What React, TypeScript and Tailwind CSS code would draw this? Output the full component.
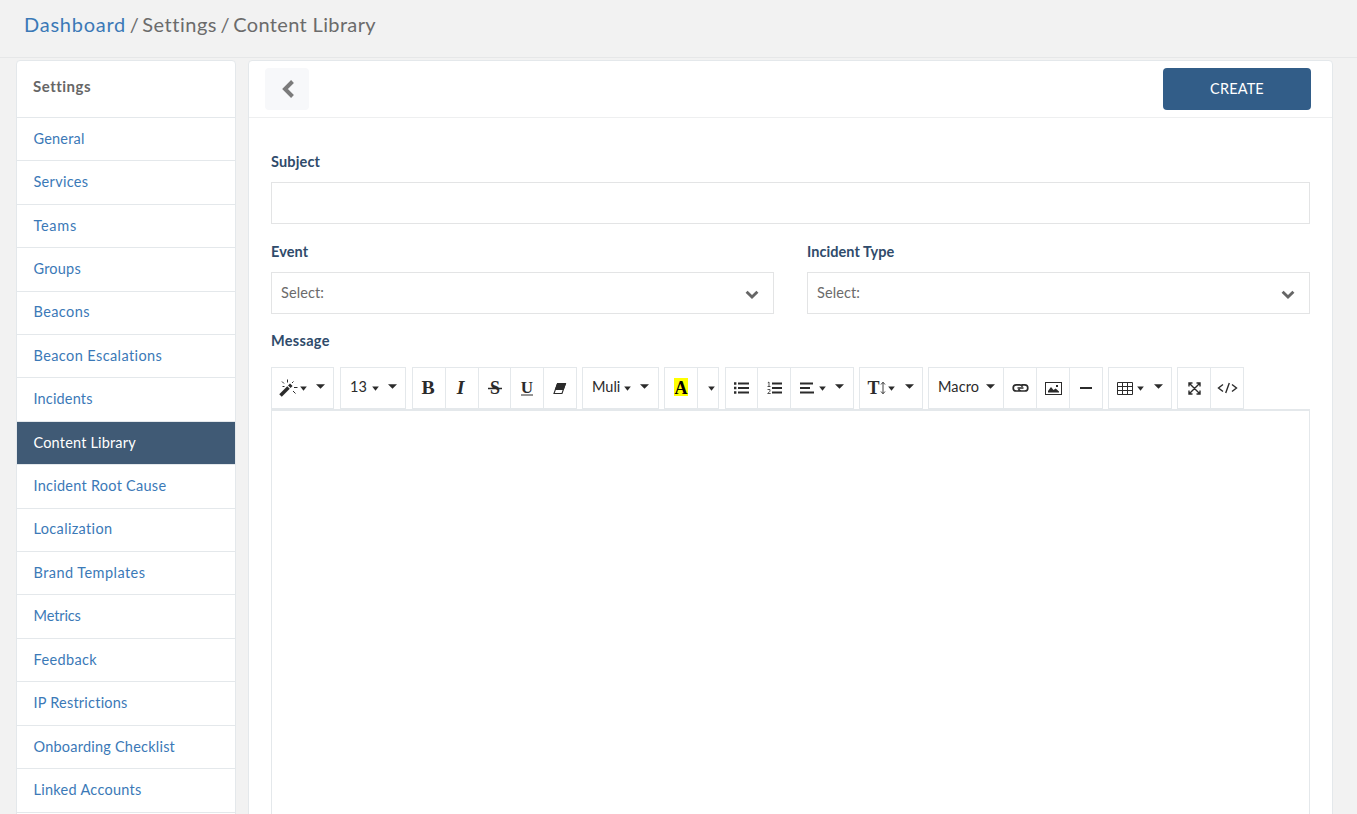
import type { ReactNode } from "react"
import clsx from "clsx"

const menu = [
    { label: "General", tracking: "tracking-[0.2px]" },
    { label: "Services", tracking: "tracking-[0.3px]" },
    { label: "Teams", tracking: "tracking-[0.7px]" },
    { label: "Groups", tracking: "tracking-[0.2px]" },
    { label: "Beacons", tracking: "tracking-[0.4px]" },
    { label: "Beacon Escalations", tracking: "tracking-[0.41px]" },
    { label: "Incidents", tracking: "tracking-[0.16px]" },
    { label: "Content Library", tracking: "tracking-[0.18px]" },
    { label: "Incident Root Cause", tracking: "tracking-[0.26px]" },
    { label: "Localization", tracking: "tracking-[0.34px]" },
    { label: "Brand Templates", tracking: "tracking-[0.45px]" },
    { label: "Metrics", tracking: "tracking-[-0.1px]" },
    { label: "Feedback", tracking: "tracking-[0.36px]" },
    { label: "IP Restrictions", tracking: "tracking-[0.22px]" },
    { label: "Onboarding Checklist", tracking: "tracking-[0.22px]" },
    { label: "Linked Accounts", tracking: "tracking-[0.28px]" },
]

function Group({ children }: { children: ReactNode }) {
    return <div className="flex border-l border-[#e4e8eb]">{children}</div>
}

function Btn({ className, children }: { className: string; children: ReactNode }) {
    return (
        <button
            type="button"
            className={clsx("flex h-[42px] shrink-0 items-center border-y border-r border-[#e4e8eb] bg-white text-[#2b2b2b]", className)}
        >
            {children}
        </button>
    )
}

function SmallCaret({ className }: { className?: string }) {
    return (
        <svg className={clsx("shrink-0", className)} width="7" height="5" viewBox="0 0 7 5">
            <path d="M0.2 0.5h6.6L3.5 4.8z" fill="currentColor" />
        </svg>
    )
}

function Caret({ className }: { className?: string }) {
    return (
        <svg className={clsx("mb-1 shrink-0", className)} width="9" height="5" viewBox="0 0 9 5">
            <path d="M0 0.3h9L4.5 4.7z" fill="currentColor" />
        </svg>
    )
}

function Icon({ w, h = 16, children }: { w: number; h?: number; children: ReactNode }) {
    return (
        <svg className="shrink-0 overflow-visible" width={w} height={h} viewBox={`0 0 ${w} ${h}`} fill="none" stroke="currentColor">
            {children}
        </svg>
    )
}

function Chevron({ className }: { className: string }) {
    return (
        <svg className={className} width="14" height="10" viewBox="0 0 14 10" fill="none" stroke="#666" strokeWidth="2.9">
            <path d="M1.6 1.7L7 7l5.4-5.3" />
        </svg>
    )
}

function Label({ className, children }: { className?: string; children: ReactNode }) {
    return <label className={clsx("block h-5 text-[14.5px] leading-5 font-bold text-[#2f4b6b]", className)}>{children}</label>
}

function Select({ label, tracking }: { label: string; tracking: string }) {
    return (
        <div className="w-[503px]">
            <Label className={tracking}>{label}</Label>
            <div className="mt-[10px] flex h-[42px] items-center justify-between border border-[#e3e4e5] pr-[14px] pl-[9px] text-[14.5px] text-[#6b6b6b]">
                <span className="tracking-[0.1px]">Select:</span>
                <Chevron className="mt-[3px]" />
            </div>
        </div>
    )
}

function Toolbar() {
    return (
        <div className="flex text-[14.5px]">
            <Group>
                <Btn className="w-[62px] pl-[7px]">
                    <Icon w={19} h={18}>
                        <path d="M1.5 16.5l8-8" strokeWidth="3.6" />
                        <path d="M10.3 7.7l2-2" strokeWidth="3.6" />
                        <path d="M8.5 0.5v3M3 2.5l2 2M14.5 2.5l-1.5 1.5M3.5 7.5h2M15 8.5h3.5M14 12l2.5 2.5" strokeWidth="1" />
                    </Icon>
                    <SmallCaret className="ml-[2px]" />
                    <Caret className="ml-[9px]" />
                </Btn>
            </Group>
            <div className="ml-[6px]">
                <Group>
                    <Btn className="w-[65px] pl-[9px]">
                        <span className="mb-[2px] w-[22px] text-left">13</span>
                        <SmallCaret />
                        <Caret className="ml-[9px]" />
                    </Btn>
                </Group>
            </div>
            <div className="ml-[6px] font-['Liberation_Serif'] text-[18px]">
                <Group>
                    <Btn className="w-[33px] justify-center pr-[2px] font-bold"><span className="scale-x-110">B</span></Btn>
                    <Btn className="w-[33px] justify-center pr-[2px] font-bold italic"><span className="scale-x-110">I</span></Btn>
                    <Btn className="w-[32px] justify-center font-bold">
                        <Icon w={14}>
                            <text x="7" y="14" textAnchor="middle" fontSize="18" stroke="none" fill="currentColor">S</text>
                            <path d="M0 8.5h14" strokeWidth="1.5" />
                        </Icon>
                    </Btn>
                    <Btn className="w-[33px] justify-center font-bold">
                        <Icon w={14}>
                            <text x="7" y="13" textAnchor="middle" fontSize="17" stroke="none" fill="currentColor">U</text>
                            <path d="M1 15h12" strokeWidth="1" />
                        </Icon>
                    </Btn>
                    <Btn className="w-[33px] justify-center pr-px">
                        <Icon w={13} h={13}>
                            <path d="M4.5 1.5h8l-3.5 10h-8z" strokeWidth="1.1" />
                            <path d="M4.500 1.500h8L10.300 7.500H2.400z" fill="currentColor" strokeWidth="1" />
                        </Icon>
                    </Btn>
                </Group>
            </div>
            <div className="ml-[5px]">
                <Group>
                    <Btn className="w-[76px] pl-[9px]">
                        <span className="mb-[2px] w-[32px] text-left">Muli</span>
                        <SmallCaret />
                        <Caret className="ml-[9px]" />
                    </Btn>
                </Group>
            </div>
            <div className="ml-[5px]">
                <Group>
                    <Btn className="w-[33px] pl-[9px]">
                        <span className="mb-[2px] flex h-[18px] w-[14px] items-center justify-center bg-[#ffff00] pt-[2px] font-['Liberation_Serif'] text-[18px] font-bold text-black">A</span>
                    </Btn>
                    <Btn className="w-[21px] pl-[10px]"><SmallCaret /></Btn>
                </Group>
            </div>
            <div className="ml-[6px]">
                <Group>
                    <Btn className="w-[32px] justify-center">
                        <Icon w={15} h={14}>
                            <path d="M4 2.5h11M4 7h11M4 11.5h11" strokeWidth="2" />
                            <path d="M0 2.5h2.4M0 7h2.4M0 11.5h2.4" strokeWidth="2.4" />
                        </Icon>
                    </Btn>
                    <Btn className="w-[33px] justify-center">
                        <Icon w={15} h={14}>
                            <path d="M5 2.5h10M5 7h10M5 11.5h10" strokeWidth="2" />
                            <path d="M0.8 1.8L2 1v4.5M0.5 5.5h3M0.5 8.5h2.5v1.7L0.7 12.5h3" strokeWidth="0.8" />
                        </Icon>
                    </Btn>
                    <Btn className="w-[63px] pl-[9px]">
                        <Icon w={14} h={14}>
                            <path d="M0 2.5h13M0 7h10M0 11.5h14" strokeWidth="2" />
                        </Icon>
                        <SmallCaret className="ml-[5px]" />
                        <Caret className="ml-[9px]" />
                    </Btn>
                </Group>
            </div>
            <div className="ml-[5px]">
                <Group>
                    <Btn className="w-[63px] pl-[7px]">
                        <span className="w-[13px] font-['Liberation_Serif'] text-[18px] font-bold">T</span>
                        <Icon w={6} h={14}>
                            <path d="M3 1.5v11M1 3.5l2-2.3 2 2.3M1 10.5l2 2.3 2-2.3" strokeWidth="0.9" />
                        </Icon>
                        <SmallCaret className="ml-[2px]" />
                        <Caret className="ml-[10px]" />
                    </Btn>
                </Group>
            </div>
            <div className="ml-[5px]">
                <Group>
                    <Btn className="w-[75px] pl-[9px]">
                        <span className="mb-[2px] w-[48px] text-left tracking-[0.1px]">Macro</span>
                        <Caret />
                    </Btn>
                    <Btn className="w-[33px] justify-center">
                        <Icon w={17} h={10}>
                            <path d="M7.5 8H4.3a3.1 3.1 0 010-6.2h3.4c1.2 0 2.3.8 2.7 1.9M9.5 1.8h3.2a3.1 3.1 0 010 6.2H9.3c-1.2 0-2.3-.8-2.7-1.9M5.5 5h6" strokeWidth="1.7" />
                        </Icon>
                    </Btn>
                    <Btn className="w-[33px] justify-center">
                        <Icon w={17} h={13}>
                            <rect x="0.5" y="0.5" width="16" height="12" strokeWidth="1" />
                            <path d="M3 10.5V9l3-4 2.5 3 2.2-1.6L14 9.5v1zM11 3h2v2h-2z" fill="currentColor" stroke="none" />
                        </Icon>
                    </Btn>
                    <Btn className="w-[33px] justify-center">
                        <Icon w={12} h={2}><path d="M0 1h12" strokeWidth="2" /></Icon>
                    </Btn>
                </Group>
            </div>
            <div className="ml-[5px]">
                <Group>
                    <Btn className="w-[63px] pl-[8px]">
                        <Icon w={16} h={13}>
                            <path d="M0.5 0.5h15v12h-15zM5.5 0.5v12M10.5 0.5v12M0.5 4.5h15M0.5 8.5h15" strokeWidth="1" />
                        </Icon>
                        <SmallCaret className="ml-1" />
                        <Caret className="ml-[10px]" />
                    </Btn>
                </Group>
            </div>
            <div className="ml-[5px]">
                <Group>
                    <Btn className="w-[33px] justify-center">
                        <Icon w={13} h={13}>
                            <path d="M1.5 1.5l10 10M11.5 1.5l-10 10M1 4.5V1h3.5M8.5 1H12v3.5M12 8.5V12H8.5M4.5 12H1V8.5" strokeWidth="1.4" />
                        </Icon>
                    </Btn>
                    <Btn className="w-[33px] justify-center">
                        <Icon w={21} h={12}>
                            <path d="M6 2.5L1.5 6 6 9.5M15 2.5L19.5 6 15 9.5M12.3 1L8.7 11" strokeWidth="1.4" />
                        </Icon>
                    </Btn>
                </Group>
            </div>
        </div>
    )
}

export default function App() {
    return (
        <div className="h-[814px] overflow-hidden bg-[#f2f2f2] font-[Lato,sans-serif]">
            <header className="h-[58px] border-b border-[#e6e7e8] pt-[9px] pl-6 text-[20px] leading-[30px] text-[#6b6b6b] [word-spacing:-1.5px]">
                <a href="#" className="tracking-[0.75px] text-[#3b79b7]">Dashboard</a> / <span className="tracking-[0.5px]">Settings</span> /{" "}
                <span className="tracking-[0.35px] [word-spacing:0px]">Content Library</span>
            </header>
            <div className="flex gap-3 pt-[2px] pl-4">
                <aside className="w-[220px] shrink-0 rounded-t-sm border border-[#e4e8eb] bg-white">
                    <h2 className="h-[57px] border-b border-[#e4e8eb] pt-[15px] pl-4 text-[15px] leading-5 font-bold tracking-[0.5px] text-[#666]">Settings</h2>
                    <ul>
                        {menu.map((item) => (
                            <li
                                key={item.label}
                                className={clsx(
                                    "flex h-[43.42px] items-center border-b border-[#e4e8eb] pb-px pl-[16.5px] text-[14.5px]",
                                    item.tracking,
                                    item.label === "Content Library" ? "bg-[#405a75] text-white" : "text-[#3b79b7]",
                                )}
                            >
                                <a href="#">{item.label}</a>
                            </li>
                        ))}
                    </ul>
                </aside>
                <main className="h-[800px] w-[1085px] shrink-0 rounded-t-sm border border-[#e4e8eb] bg-white">
                    <div className="flex h-[57px] items-start justify-between border-b border-[#eeeff0] pt-[7px] pr-[21px] pl-4">
                        <button type="button" className="flex h-[42px] w-11 items-center justify-center rounded-sm bg-[#f7f8fa] pl-[2px]">
                            <svg width="14" height="20" viewBox="0 0 14 20" fill="none" stroke="#7b7b7b" strokeWidth="4">
                                <path d="M11.5 2.5L4 10l7.5 7.5" />
                            </svg>
                        </button>
                        <button type="button" className="h-[42px] w-[148px] rounded-sm bg-[#325d88] text-[14.5px] tracking-[0.15px] text-white">CREATE</button>
                    </div>
                    <form className="pt-[34px] pr-[22px] pl-[22px]">
                        <Label className="tracking-[0.15px]">Subject</Label>
                        <input type="text" className="mt-[10px] block h-[42px] w-full border border-[#e3e4e5]" />
                        <div className="mt-[18px] flex justify-between">
                            <Select label="Event" tracking="tracking-[0.1px]" />
                            <Select label="Incident Type" tracking="tracking-[0.05px]" />
                        </div>
                        <Label className="mt-[17px] mb-4 tracking-[0.3px]">Message</Label>
                        <Toolbar />
                        <div className="h-[420px] border border-t-2 border-[#e4e8eb]" />
                    </form>
                </main>
            </div>
        </div>
    )
}
